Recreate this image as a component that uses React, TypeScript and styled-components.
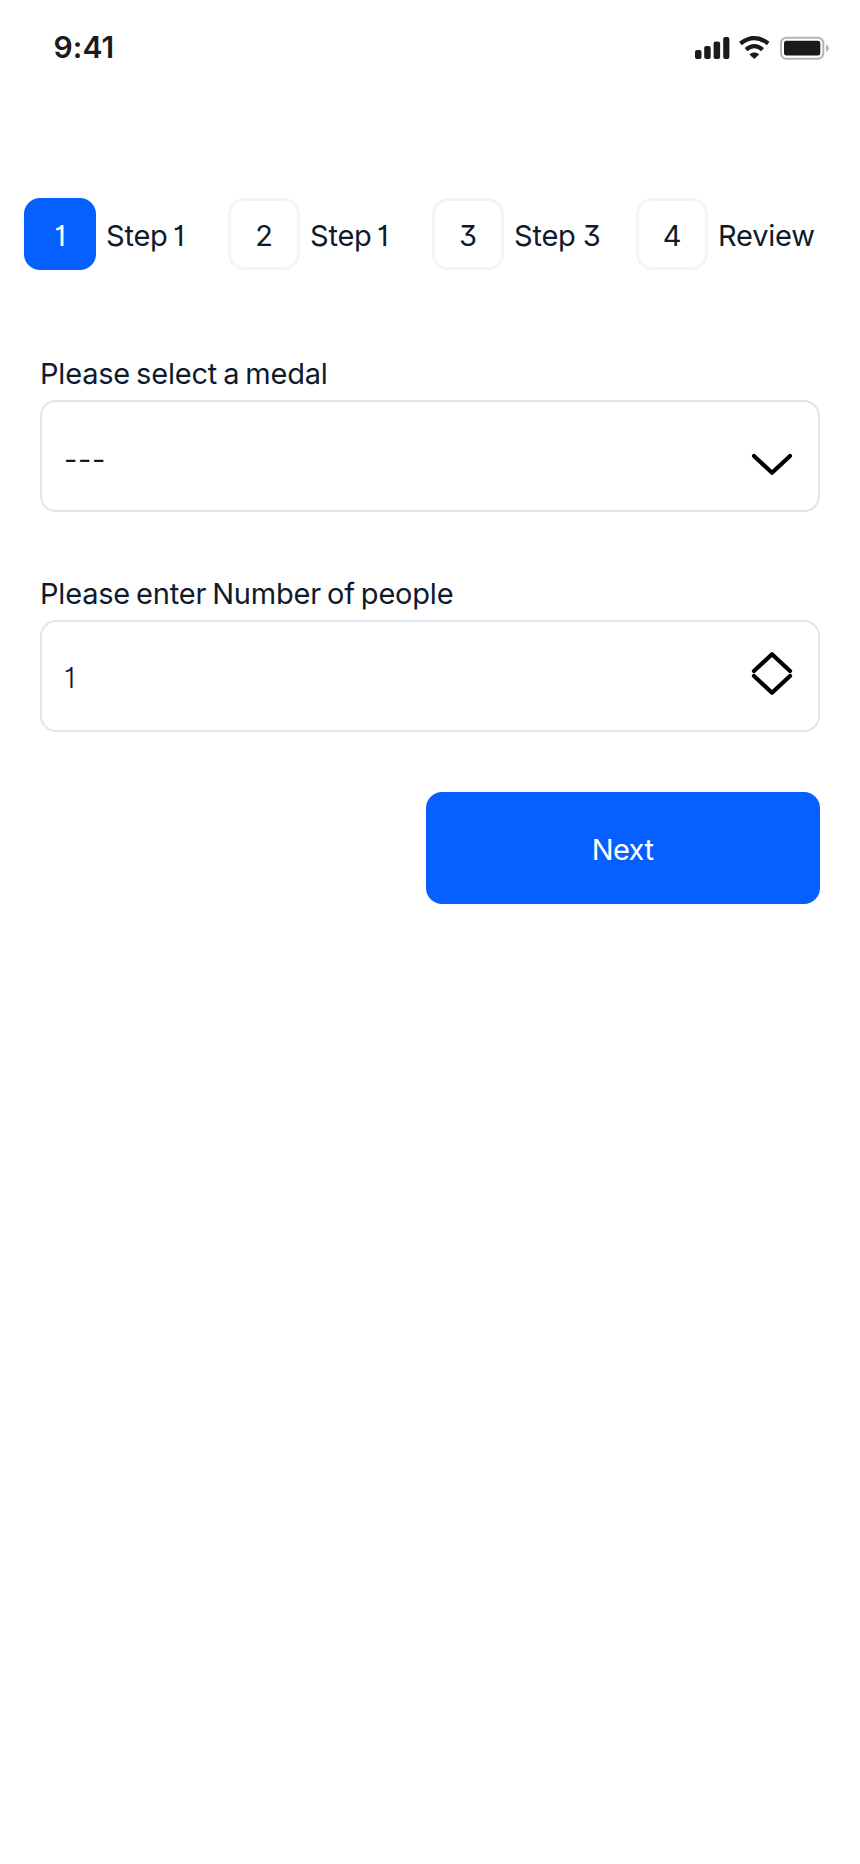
import React from "react";
import styled, { createGlobalStyle } from "styled-components";

const GlobalStyle = createGlobalStyle`
  *, *::before, *::after { box-sizing: border-box; }
  body {
    margin: 0;
    background: #ffffff;
    color: #0f1b2d;
    font-family: Inter, "Liberation Sans", sans-serif;
  }
`;

const Screen = styled.main`
  width: 860px;
  height: 1864px;
  background: #ffffff;
  overflow: hidden;
`;

const StatusBar = styled.header`
  display: flex;
  align-items: center;
  justify-content: space-between;
  height: 94px;
  padding: 0 31px 0 53.5px;
`;

const Clock = styled.time`
  font-size: 30px;
  font-weight: 600;
  line-height: 36px;
  letter-spacing: 0.1px;
  color: #1b1b1b;
`;

const StatusIcons = styled.svg`
  width: 136px;
  height: 28px;
  margin-top: 2px;
`;

const Steps = styled.ol`
  display: grid;
  grid-template-columns: repeat(4, 204px);
  margin: 104px 0 0;
  padding: 0 0 0 24px;
  list-style: none;
  font-feature-settings: "cv01", "cv09";
`;

const Step = styled.li`
  display: flex;
  align-items: center;
  gap: 10px;
  height: 72px;
`;

const StepNumber = styled.span<{ $active?: boolean }>`
  display: flex;
  align-items: center;
  justify-content: center;
  width: 72px;
  height: 72px;
  padding-top: 3px;
  border: 3px solid ${(p) => (p.$active ? "#0560ff" : "#f1f5fb")};
  border-radius: 16px;
  background: ${(p) => (p.$active ? "#0560ff" : "#ffffff")};
  color: ${(p) => (p.$active ? "#ffffff" : "#0f1b2d")};
  font-size: 29px;
  line-height: 36px;
`;

const StepLabel = styled.span<{ $wordGap: number }>`
  padding-top: 3px;
  font-size: 29px;
  line-height: 36px;
  white-space: nowrap;
  letter-spacing: -0.2px;
  word-spacing: ${(p) => p.$wordGap}px;
`;

const Form = styled.form`
  display: flex;
  flex-direction: column;
  gap: 60px;
  padding: 86px 40px 0;
  font-feature-settings: "cv01", "cv09";
`;

const Field = styled.div`
  display: flex;
  flex-direction: column;
  gap: 8px;
`;

const FieldLabel = styled.label`
  height: 36px;
  font-size: 29px;
  line-height: 36px;
  white-space: nowrap;
  letter-spacing: -0.2px;
  word-spacing: -1.9px;
`;

const Fields = styled.div`
  display: flex;
  flex-direction: column;
  gap: 64px;
`;

const Control = styled.div`
  display: flex;
  align-items: center;
  justify-content: space-between;
  height: 112px;
  padding: 0 25px 0 22px;
  border: 2px solid #dee4f0;
  border-radius: 16px;
`;

const Value = styled.span<{ $placeholder?: boolean }>`
  padding-top: ${(p) => (p.$placeholder ? 7 : 3)}px;
  font-size: 29px;
  font-weight: ${(p) => (p.$placeholder ? 400 : 300)};
  line-height: 36px;
  letter-spacing: ${(p) => (p.$placeholder ? 0.6 : 0)}px;
`;

const ControlIcon = styled.svg`
  width: 42px;
  height: 46px;
  overflow: visible;
  fill: none;
  stroke: #000000;
  stroke-width: 4.2;
  stroke-linecap: round;
  stroke-linejoin: round;
`;

const NextButton = styled.button`
  align-self: flex-end;
  width: 394px;
  height: 112px;
  padding: 3px 1px 0 0;
  border: 0;
  border-radius: 16px;
  background: #0560ff;
  color: #ffffff;
  font-family: inherit;
  font-size: 29px;
  line-height: 36px;
  letter-spacing: -0.6px;
`;

const steps = [
  { number: 1, label: "Step 1", wordGap: -2.6, active: true },
  { number: 2, label: "Step 1", wordGap: -2.6 },
  { number: 3, label: "Step 3", wordGap: -0.8 },
  { number: 4, label: "Review", wordGap: 0 },
];

export default function App() {
  return (
    <>
      <GlobalStyle />
      <Screen>
        <StatusBar>
          <Clock>9:41</Clock>
          <StatusIcons viewBox="0 0 136 28" fill="#1b1b1b" aria-hidden="true">
            <rect x="2" y="16" width="6.5" height="9" rx="2" />
            <rect x="11.2" y="12" width="6.5" height="13" rx="2" />
            <rect x="20.6" y="7.5" width="6.5" height="17.5" rx="2" />
            <rect x="30.2" y="3" width="6.2" height="22" rx="2" />
            <path d="M61.2 24.6 56.8 20.4Q61.2 17.2 65.8 20.4Z" stroke="#1b1b1b" strokeWidth=".8" strokeLinejoin="round" />
            <g fill="none" stroke="#1b1b1b" strokeWidth="4.2">
              <path d="M47.4 9.5Q61.3-1.4 75.2 9.5" />
              <path d="M53 15.7Q61.3 8.6 69.6 15.7" />
            </g>
            <rect x="88" y="3.7" width="42.3" height="21" rx="5.5" fill="none" stroke="#b4b4b4" strokeWidth="2" />
            <rect x="91" y="6.8" width="36.3" height="14.8" rx="2.5" />
            <path d="M133 10.2Q136 12 136 14.2T133 18.2Z" fill="#b4b4b4" />
          </StatusIcons>
        </StatusBar>
        <Steps>
          {steps.map((s) => (
            <Step key={s.number}>
              <StepNumber $active={s.active}>{s.number}</StepNumber>
              <StepLabel $wordGap={s.wordGap}>{s.label}</StepLabel>
            </Step>
          ))}
        </Steps>
        <Form>
          <Fields>
            <Field>
              <FieldLabel>Please select a medal</FieldLabel>
              <Control>
                <Value $placeholder>---</Value>
                <ControlIcon viewBox="0 0 42 46">
                  <path d="M3 23 21 39.7 39 23" />
                </ControlIcon>
              </Control>
            </Field>
            <Field>
              <FieldLabel>Please enter Number of people</FieldLabel>
              <Control>
                <Value>1</Value>
                <ControlIcon viewBox="0 0 42 46">
                  <path d="M3 18 21 1.3 39 18M3 23 21 39.7 39 23" />
                </ControlIcon>
              </Control>
            </Field>
          </Fields>
          <NextButton type="button">Next</NextButton>
        </Form>
      </Screen>
    </>
  );
}
